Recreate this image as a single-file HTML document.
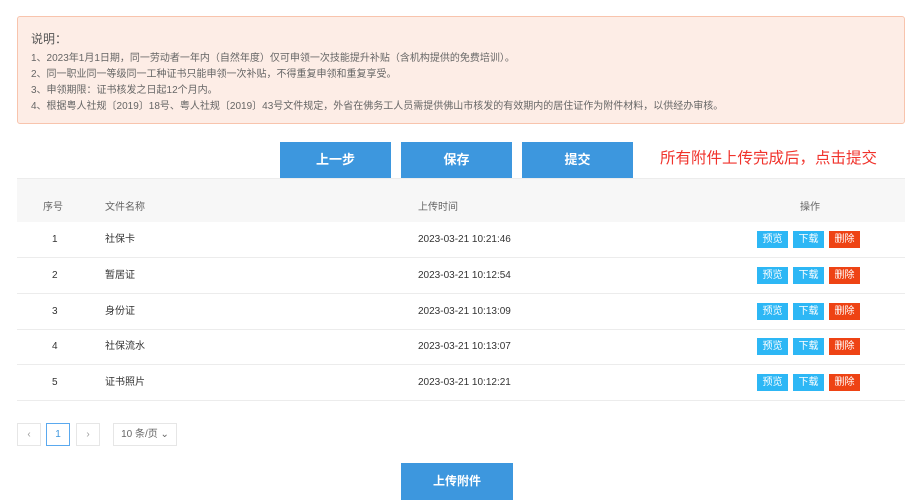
<!DOCTYPE html>
<html><head><meta charset="utf-8"><style>
*{margin:0;padding:0;box-sizing:border-box}
body{width:920px;height:504px;background:#fff;font-family:"Liberation Sans","Noto Sans CJK SC",sans-serif;color:#333;position:relative;overflow:hidden}
.note{position:absolute;left:17px;top:16px;width:888px;height:108px;background:#fdede6;border:1px solid #f8c4ad;border-radius:3px;padding:14px 0 0 13px;color:#666;font-size:10px;line-height:16px}
.note .t{font-size:12px;color:#555;margin-bottom:4px;line-height:16px}
.btn{position:absolute;top:142px;width:111px;height:36px;background:#3d97de;color:#fff;font-size:13px;font-weight:bold;text-align:center;line-height:36px}
.tip{position:absolute;left:660px;top:149px;color:#f0332c;font-size:15.5px;line-height:20px}
.hdr{position:absolute;left:17px;top:178px;width:888px;height:44px;background:#f7f7f7;border-top:1px solid #ececec}
.c{position:absolute;font-size:10px;color:#666;top:22px;line-height:14px}
.row{position:absolute;left:17px;width:888px;height:36px;border-bottom:1px solid #ececec;font-size:10px;color:#333}
.row span{position:absolute;top:0;line-height:35px}
.b{position:absolute;top:9px;height:17px;width:31px;color:#fff;font-size:10px;line-height:17px;text-align:center;font-style:normal}
.pg{position:absolute;top:423px;height:23px;border:1px solid #e6e6e6;font-size:10px;color:#999;text-align:center;line-height:21px}
</style></head><body>
<div class="note"><div class="t">说明：</div>
1、2023年1月1日期，同一劳动者一年内（自然年度）仅可申领一次技能提升补贴（含机构提供的免费培训）。<br>
2、同一职业同一等级同一工种证书只能申领一次补贴，不得重复申领和重复享受。<br>
3、申领期限：证书核发之日起12个月内。<br>
4、根据粤人社规〔2019〕18号、粤人社规〔2019〕43号文件规定，外省在佛务工人员需提供佛山市核发的有效期内的居住证作为附件材料，以供经办审核。</div>
<div class="btn" style="left:280px">上一步</div>
<div class="btn" style="left:401px">保存</div>
<div class="btn" style="left:522px">提交</div>
<div class="tip">所有附件上传完成后，点击提交</div>
<div class="hdr">
<span class="c" style="left:26px">序号</span>
<span class="c" style="left:88px">文件名称</span>
<span class="c" style="left:401px">上传时间</span>
<span class="c" style="left:783px">操作</span>
</div>
<div class="row" style="top:222px"><span style="left:35px">1</span><span style="left:88px">社保卡</span><span style="left:401px">2023-03-21 10:21:46</span><i class="b" style="left:740px;background:#2db7f5">预览</i><i class="b" style="left:776px;background:#2db7f5">下载</i><i class="b" style="left:812px;background:#ee4314">删除</i></div>
<div class="row" style="top:258px"><span style="left:35px">2</span><span style="left:88px">暂居证</span><span style="left:401px">2023-03-21 10:12:54</span><i class="b" style="left:740px;background:#2db7f5">预览</i><i class="b" style="left:776px;background:#2db7f5">下载</i><i class="b" style="left:812px;background:#ee4314">删除</i></div>
<div class="row" style="top:294px"><span style="left:35px">3</span><span style="left:88px">身份证</span><span style="left:401px">2023-03-21 10:13:09</span><i class="b" style="left:740px;background:#2db7f5">预览</i><i class="b" style="left:776px;background:#2db7f5">下载</i><i class="b" style="left:812px;background:#ee4314">删除</i></div>
<div class="row" style="top:329px"><span style="left:35px">4</span><span style="left:88px">社保流水</span><span style="left:401px">2023-03-21 10:13:07</span><i class="b" style="left:740px;background:#2db7f5">预览</i><i class="b" style="left:776px;background:#2db7f5">下载</i><i class="b" style="left:812px;background:#ee4314">删除</i></div>
<div class="row" style="top:365px"><span style="left:35px">5</span><span style="left:88px">证书照片</span><span style="left:401px">2023-03-21 10:12:21</span><i class="b" style="left:740px;background:#2db7f5">预览</i><i class="b" style="left:776px;background:#2db7f5">下载</i><i class="b" style="left:812px;background:#ee4314">删除</i></div>
<div class="pg" style="left:17px;width:24px">‹</div>
<div class="pg" style="left:46px;width:24px;border-color:#5aa9ef;color:#3d97de">1</div>
<div class="pg" style="left:76px;width:24px">›</div>
<div class="pg" style="left:113px;width:64px;color:#666">10 条/页 ⌄</div>
<div class="btn" style="left:401px;top:463px;width:112px;height:37px;line-height:37px;font-size:12px">上传附件</div>
</body></html>
